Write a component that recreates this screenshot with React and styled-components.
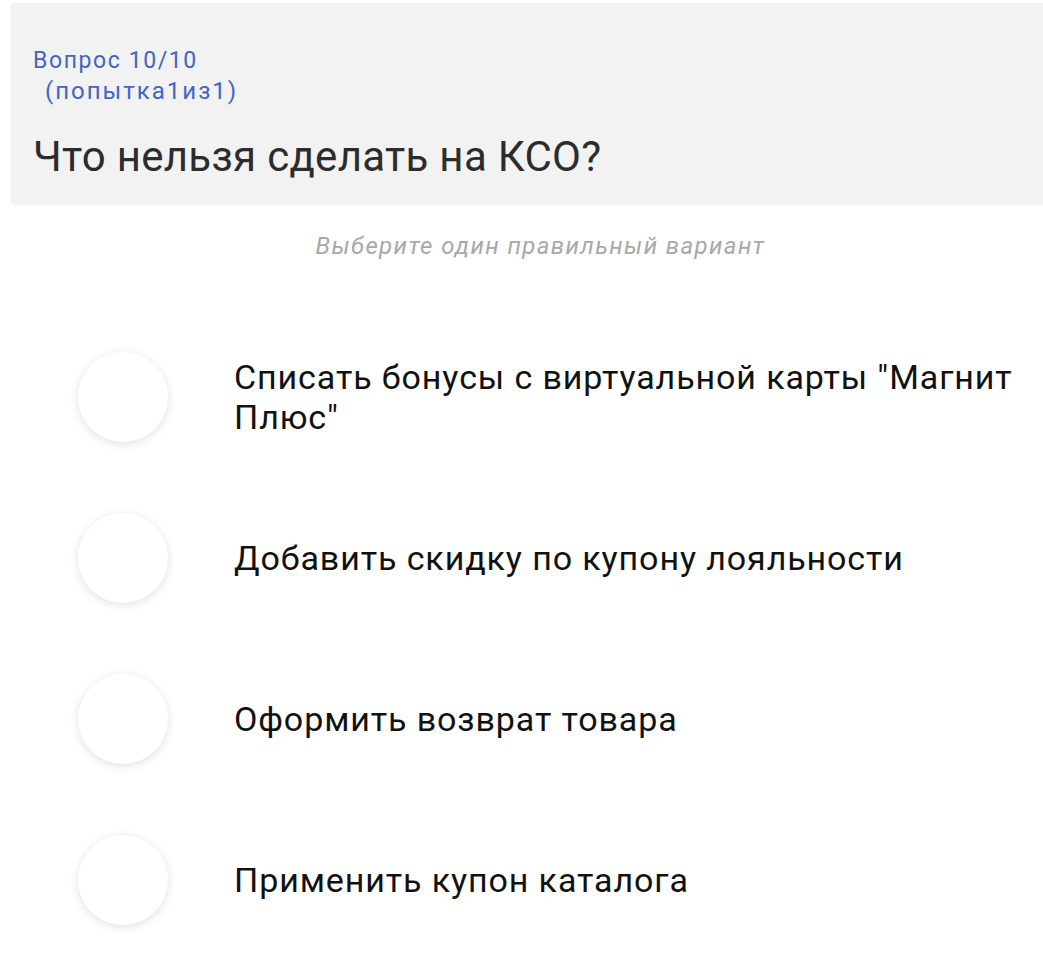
import React from "react"
import styled, { createGlobalStyle } from "styled-components"

const GlobalStyle = createGlobalStyle`
  html, body {
    margin: 0;
    padding: 0;
    background: #ffffff;
    font-family: Roboto, "Noto Sans", sans-serif;
  }
`

const options = [
  'Списать бонусы с виртуальной карты "Магнит Плюс"',
  "Добавить скидку по купону лояльности",
  "Оформить возврат товара",
  "Применить купон каталога",
]

const App = () => {
  return (
    <Page>
      <GlobalStyle />
      <QuestionCard>
        <Counter>Вопрос 10/10</Counter>
        <Attempt>(попытка1из1)</Attempt>
        <Title>Что нельзя сделать на КСО?</Title>
      </QuestionCard>
      <Hint>Выберите один правильный вариант</Hint>
      <OptionList>
        {options.map((text) => (
          <OptionRow key={text}>
            <Radio />
            <OptionText>{text}</OptionText>
          </OptionRow>
        ))}
      </OptionList>
    </Page>
  )
}

export default App

const Page = styled.div`
  width: 1043px;
  min-height: 975px;
  padding-top: 3px;
  box-sizing: border-box;
`

const QuestionCard = styled.div`
  margin-left: 11px;
  height: 201px;
  box-sizing: border-box;
  padding: 43px 22px 0 22px;
  background: #f2f2f2;
  border-radius: 4px 0 0 4px;
  box-shadow: 0 1px 2px rgba(0, 0, 0, 0.06);
`

const Counter = styled.div`
  font-size: 23px;
  line-height: 30px;
  letter-spacing: 1.6px;
  color: #4463c9;
`

const Attempt = styled.div`
  font-size: 24px;
  line-height: 30px;
  letter-spacing: 2px;
  color: #4463c9;
  padding-left: 12px;
`

const Title = styled.div`
  margin-top: 27px;
  font-size: 42px;
  line-height: 48px;
  letter-spacing: 0.3px;
  color: #2c2c2c;
`

const Hint = styled.div`
  margin-top: 27px;
  padding-left: 38px;
  text-align: center;
  font-size: 24px;
  line-height: 30px;
  font-style: italic;
  color: #a8a8a8;
  letter-spacing: 1.4px;
`

const OptionList = styled.div`
  display: flex;
  flex-direction: column;
  margin-top: 55px;
`

const OptionRow = styled.div`
  display: flex;
  align-items: center;
  height: 161px;
  padding-left: 78px;
  padding-right: 20px;
`

const Radio = styled.div`
  flex: 0 0 90px;
  width: 90px;
  height: 90px;
  border-radius: 50%;
  background: #ffffff;
  box-shadow: 0 2px 10px rgba(0, 0, 0, 0.12);
`

const OptionText = styled.div`
  margin-left: 66px;
  font-size: 34px;
  line-height: 40px;
  letter-spacing: 0.9px;
  color: #111111;
`
